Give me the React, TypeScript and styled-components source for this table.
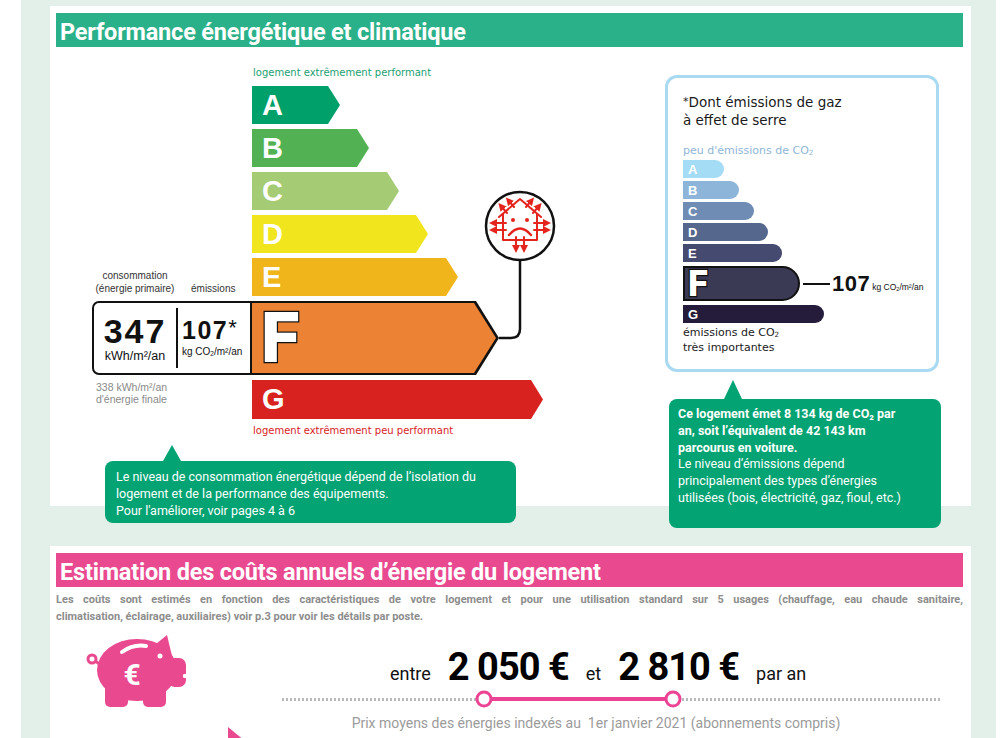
import React from "react";
import styled, { createGlobalStyle } from "styled-components";

const GlobalStyle = createGlobalStyle`
  html, body {
    margin: 0;
    padding: 0;
    background: #fff;
    overflow: hidden;
  }
  body {
    font-family: Roboto, "Liberation Sans", Arial, sans-serif;
  }
`;

const GREEN = "#03a373";
const PINK = "#e9498f";

const Page = styled.div`
  margin-left: 21px;
  width: 975px;
  height: 738px;
  overflow: hidden;
  box-sizing: border-box;
  padding: 6px 25px 0 29px;
  background: #e3efe9;
`;

const Panel = styled.section<{ $height?: number }>`
  background: #fff;
  height: ${(p) => (p.$height ? `${p.$height}px` : "auto")};
  padding: 7px 8px 0 6px;
  box-sizing: border-box;
  & + & {
    margin-top: 40px;
  }
`;

const SectionTitle = styled.h2<{ $bg: string }>`
  margin: 0;
  height: 34px;
  box-sizing: border-box;
  padding: 5px 0 0 4px;
  line-height: 30px;
  background: ${(p) => p.$bg};
  color: #fff;
  font: 700 23.5px Roboto, sans-serif;
  letter-spacing: -0.2px;
  white-space: nowrap;
`;

/* ---------- DPE part ---------- */

const DpeRow = styled.div`
  display: flex;
  margin-top: 19px;
`;

const LeftCol = styled.div`
  display: flex;
  flex-direction: column;
  margin-left: 36px;
`;

const ChartGrid = styled.div`
  display: grid;
  grid-template-columns: 160px 247px 60px;
  grid-template-rows: 15px repeat(5, 38px) 74px 39px 12px;
  row-gap: 5px;
`;

const ScaleLabel = styled.div<{ $color: string; $row: number }>`
  grid-column: 2 / 4;
  grid-row: ${(p) => p.$row};
  padding-left: 1px;
  font: 10px "DejaVu Sans", sans-serif;
  line-height: 13px;
  color: ${(p) => p.$color};
  white-space: nowrap;
`;

const Bar = styled.div<{ $color: string; $width: number; $row: number; $span?: boolean }>`
  grid-column: ${(p) => (p.$span ? "2 / 4" : "2")};
  grid-row: ${(p) => p.$row};
  width: ${(p) => p.$width}px;
  background: ${(p) => p.$color};
  clip-path: polygon(0 0, calc(100% - 12px) 0, 100% 50%, calc(100% - 12px) 100%, 0 100%);
  display: flex;
  align-items: center;
  padding-left: 10px;
  box-sizing: border-box;
  color: #fff;
  font: 700 29px "Liberation Sans", Arial, sans-serif;
`;

const FFrame = styled.div`
  grid-column: 2;
  grid-row: 7;
  background: #111;
  padding: 2px 3px 2px 0;
  clip-path: polygon(0 0, calc(100% - 23px) 0, 100% 50%, calc(100% - 23px) 100%, 0 100%);
  display: flex;
`;

const FFill = styled.div`
  flex: 1;
  background: #eb8234;
  clip-path: polygon(0 0, calc(100% - 22px) 0, 100% 50%, calc(100% - 22px) 100%, 0 100%);
  display: flex;
  align-items: center;
  padding-left: 9px;
`;

const BigLetter = styled.span<{ $size: number }>`
  font: 900 ${(p) => p.$size}px Roboto, "Liberation Sans", sans-serif;
  color: #fff;
  -webkit-text-stroke: 2.5px #111;
  paint-order: stroke fill;
  line-height: 1;
`;

const ValueCaptions = styled.div`
  grid-column: 1;
  grid-row: 6;
  align-self: end;
  display: flex;
  align-items: flex-end;
  font: 10px "Liberation Sans", Arial, sans-serif;
  line-height: 13px;
  color: #333;
  padding-bottom: 1px;
`;

const ConsoCaption = styled.div`
  width: 86px;
  text-align: center;
`;

const EmisCaption = styled.div`
  padding-left: 13px;
`;

const ValueBox = styled.div`
  grid-column: 1;
  grid-row: 7;
  border: 2px solid #111;
  border-radius: 7px 0 0 7px;
  display: flex;
  box-sizing: border-box;
  background: #fff;
`;

const ConsoValue = styled.div`
  width: 82px;
  display: flex;
  flex-direction: column;
  align-items: center;
  justify-content: center;
`;

const BigNumber = styled.div`
  font: 700 34px "Liberation Sans", Arial, sans-serif;
  letter-spacing: 2px;
  line-height: 36px;
  color: #111;
`;

const Unit = styled.div<{ $size: number }>`
  font: ${(p) => p.$size}px "Liberation Sans", Arial, sans-serif;
  color: #111;
  line-height: 14px;
  white-space: nowrap;
`;

const Divider = styled.div`
  width: 2px;
  background: #111;
  margin: 5px 0 5px 0;
`;

const EmisValue = styled.div`
  display: flex;
  flex-direction: column;
  justify-content: center;
  padding-left: 4px;
  padding-bottom: 4px;
`;

const MidNumber = styled.div`
  font: 700 25px "Liberation Sans", Arial, sans-serif;
  letter-spacing: 1.5px;
  line-height: 30px;
  color: #111;
  & span {
    font-weight: 400;
    font-size: 22px;
    vertical-align: 4px;
  }
`;

const Sub = styled.sub`
  font-size: 0.65em;
  vertical-align: -0.2em;
  line-height: 0;
`;

const FinalEnergy = styled.div`
  grid-column: 1;
  grid-row: 8;
  align-self: start;
  padding: 1px 0 0 4px;
  font: 10.5px "Liberation Sans", Arial, sans-serif;
  line-height: 12px;
  color: #8a8a8a;
`;

const HouseSvg = styled.svg`
  grid-column: 3;
  grid-row: 4 / 8;
  overflow: visible;
`;

const Callout = styled.div<{ $width: number; $height: number; $arrowLeft: number; $arrowH: number }>`
  position: relative;
  width: ${(p) => p.$width}px;
  height: ${(p) => p.$height}px;
  box-sizing: border-box;
  background: ${GREEN};
  border-radius: 8px;
  color: #fff;
  font: 12.5px Roboto, sans-serif;
  line-height: 17px;
  white-space: nowrap;
  &::before {
    content: "";
    position: absolute;
    left: ${(p) => p.$arrowLeft}px;
    top: -${(p) => p.$arrowH}px;
    border-left: 9px solid transparent;
    border-right: 9px solid transparent;
    border-bottom: ${(p) => p.$arrowH}px solid ${GREEN};
  }
`;

const LeftCallout = styled(Callout)`
  margin: 25px 0 0 13px;
  padding: 7px 11px;
`;

const RightCallout = styled(Callout)`
  margin: 27px 0 0 4px;
  padding: 7px 9px;
  line-height: 16.8px;
`;

const RightCol = styled.div`
  margin-left: auto;
  margin-right: 22px;
  padding-top: 9px;
  display: flex;
  flex-direction: column;
`;

const Co2Panel = styled.div`
  width: 274px;
  height: 297px;
  box-sizing: border-box;
  border: 3px solid #a9daf1;
  border-radius: 12px;
  padding: 15px 0 0 15px;
  font-family: "DejaVu Sans", Verdana, sans-serif;
  color: #1a1a1a;
`;

const Co2Title = styled.div`
  font-size: 13.5px;
  line-height: 18px;
  & small {
    font-size: 11px;
    vertical-align: 2px;
  }
`;

const Co2Note = styled.div<{ $color: string; $mt: number }>`
  margin-top: ${(p) => p.$mt}px;
  font-size: 11px;
  line-height: 15px;
  color: ${(p) => p.$color};
`;

const Co2Bars = styled.div`
  display: flex;
  flex-direction: column;
  gap: 3px;
  margin-top: 2px;
`;

const Co2Bar = styled.div<{ $color: string; $width: number }>`
  width: ${(p) => p.$width}px;
  height: 18px;
  background: ${(p) => p.$color};
  border-radius: 0 9px 9px 0;
  color: #fff;
  font: 700 13px "Liberation Sans", Arial, sans-serif;
  line-height: 19px;
  padding-left: 5px;
  box-sizing: border-box;
`;

const Co2FRow = styled.div`
  display: flex;
  align-items: center;
  margin: 1px 0;
`;

const Co2FBar = styled.div`
  width: 117px;
  height: 35px;
  box-sizing: border-box;
  background: #3b3a55;
  border: 2px solid #111;
  border-radius: 0 18px 18px 0;
  display: flex;
  align-items: center;
  padding-left: 3px;
`;

const Leader = styled.div`
  width: 27px;
  height: 2px;
  background: #111;
  margin-left: 3px;
`;

const Co2Value = styled.div`
  font: 700 22px "Liberation Sans", Arial, sans-serif;
  letter-spacing: 0.5px;
  margin-left: 2px;
  color: #111;
`;

const Co2Unit = styled.div`
  font: 8.5px "Liberation Sans", Arial, sans-serif;
  margin: 7px 0 0 2px;
  color: #111;
  white-space: nowrap;
`;

/* ---------- cost part ---------- */

const Description = styled.div`
  margin-top: 4px;
  font: 700 11px Roboto, sans-serif;
  line-height: 17px;
  color: #8d8d8d;
`;

const JustifiedLine = styled.span`
  display: block;
  text-align: justify;
  text-align-last: justify;
`;

const CostRow = styled.div`
  display: flex;
`;

const PigCol = styled.div`
  width: 226px;
  display: flex;
  flex-direction: column;
`;

const PigSvg = styled.svg`
  margin: 5px 0 0 24px;
`;

const PinkPointer = styled.div`
  margin: 17px 0 0 172px;
  width: 17px;
  height: 14px;
  background: ${PINK};
  clip-path: polygon(0 0, 100% 100%, 0 100%);
`;

const CostArea = styled.div`
  width: 658px;
  padding-top: 20px;
`;

const PriceLine = styled.div`
  display: flex;
  align-items: baseline;
  gap: 17px;
  padding-left: 108px;
  height: 40px;
  line-height: 40px;
`;

const Word = styled.span`
  font: 400 18px Roboto, sans-serif;
  color: #111;
`;

const Price = styled.span`
  font: 700 38px Roboto, sans-serif;
  letter-spacing: -1px;
  color: #000;
`;

const Slider = styled.div`
  position: relative;
  height: 16px;
  margin-top: 6px;
  display: flex;
  align-items: center;
`;

const Track = styled.div`
  width: 100%;
  height: 3px;
  background: repeating-linear-gradient(90deg, #b9b9b9 0 2px, transparent 2px 4px);
`;

const Range = styled.div`
  position: absolute;
  top: 6px;
  height: 4px;
  background: #ec4394;
`;

const Knob = styled.div`
  position: absolute;
  top: 0;
  width: 17px;
  height: 17px;
  box-sizing: border-box;
  border: 3px solid #ec4394;
  border-radius: 50%;
  background: #fff;
  transform: translate(-50%, -0.5px);
`;

const PriceNote = styled.div`
  margin-top: 7px;
  padding-right: 30px;
  text-align: center;
  font: 14px Roboto, sans-serif;
  line-height: 18px;
  color: #9b9b9b;
  white-space: pre;
`;

const energyBars = [
  { letter: "A", color: "#00a06b", width: 88 },
  { letter: "B", color: "#52b153", width: 117 },
  { letter: "C", color: "#a5cc74", width: 147 },
  { letter: "D", color: "#f1e51e", width: 176 },
  { letter: "E", color: "#f0b51a", width: 206 },
];

const co2Bars = [
  { letter: "A", color: "#a4dbf5", width: 41 },
  { letter: "B", color: "#8cb5d9", width: 56 },
  { letter: "C", color: "#6f8cb4", width: 71 },
  { letter: "D", color: "#56678d", width: 85 },
  { letter: "E", color: "#454a71", width: 99 },
];

const priceKnobs = [30.7, 59.4];

const HouseIcon = () => (
  <HouseSvg width="60" height="203" viewBox="0 0 60 203">
    <defs>
      <marker id="ah" markerWidth="4" markerHeight="4" refX="2" refY="2" orient="auto" markerUnits="strokeWidth">
        <path d="M0 0 L4 2 L0 4 Z" fill="#e3251d" />
      </marker>
    </defs>
    <path d="M21 89 V157 Q21 166 12 166 H0" fill="none" stroke="#111" strokeWidth="2.5" />
    <circle cx="21" cy="54" r="34" fill="#fff" stroke="#111" strokeWidth="2.5" />
    <g fill="none" stroke="#e3251d" strokeWidth="2" strokeLinecap="round" strokeLinejoin="round">
      <polyline points="0,45 21,27 42,45" />
      <polyline points="4,42 4,68 38,68 38,42" />
      <line x1="8" y1="41" x2="2" y2="34" markerEnd="url(#ah)" />
      <line x1="15" y1="35" x2="9.5" y2="28.5" markerEnd="url(#ah)" />
      <line x1="34" y1="41" x2="40" y2="34" markerEnd="url(#ah)" />
      <line x1="27" y1="35" x2="32.5" y2="28.5" markerEnd="url(#ah)" />
      <line x1="7" y1="51" x2="-6" y2="51" markerEnd="url(#ah)" />
      <line x1="7" y1="58" x2="-6" y2="58" markerEnd="url(#ah)" />
      <line x1="35" y1="51" x2="48" y2="51" markerEnd="url(#ah)" />
      <line x1="35" y1="58" x2="48" y2="58" markerEnd="url(#ah)" />
      <line x1="17" y1="65" x2="17" y2="77" markerEnd="url(#ah)" />
      <line x1="25" y1="65" x2="25" y2="77" markerEnd="url(#ah)" />
      <path d="M10 63 Q21 50 32 63" strokeWidth="2.4" />
    </g>
    <circle cx="14" cy="48" r="2" fill="#e3251d" />
    <circle cx="28" cy="48" r="2" fill="#e3251d" />
  </HouseSvg>
);

const PiggyBank = () => (
  <PigSvg width="110" height="80" viewBox="80 630 110 80">
    <g fill={PINK}>
      <ellipse cx="137" cy="670" rx="40" ry="31" />
      <path d="M151 648 L167 635 L172 656 Z" />
      <rect x="168" y="658" width="18" height="29" rx="7" />
      <rect x="105" y="683" width="23" height="24" rx="5" />
      <rect x="143" y="683" width="23" height="24" rx="5" />
    </g>
    <circle cx="92" cy="659" r="4" fill="none" stroke={PINK} strokeWidth="3" />
    <line x1="95" y1="661" x2="101" y2="665" stroke={PINK} strokeWidth="3" />
    <circle cx="160" cy="656" r="2.5" fill="#fff" />
    <circle cx="185" cy="676" r="2.2" fill="#fff" />
    <path d="M122 652 Q133 644 146 646" fill="none" stroke="#fff" strokeWidth="4" strokeLinecap="round" />
    <text x="132" y="685" textAnchor="middle" fill="#fff" fontFamily="Roboto, sans-serif" fontWeight="700" fontSize="30">
      €
    </text>
  </PigSvg>
);

export default function App() {
  return (
    <>
      <GlobalStyle />
      <Page>
        <Panel $height={500}>
          <SectionTitle $bg="#2bb189">Performance énergétique et climatique</SectionTitle>
          <DpeRow>
            <LeftCol>
              <ChartGrid>
                <ScaleLabel $row={1} $color="#1c9e72">
                  logement extrêmement performant
                </ScaleLabel>
                {energyBars.map((b, i) => (
                  <Bar key={b.letter} $row={i + 2} $color={b.color} $width={b.width}>
                    {b.letter}
                  </Bar>
                ))}
                <ValueCaptions>
                  <ConsoCaption>
                    consommation
                    <br />
                    (énergie primaire)
                  </ConsoCaption>
                  <EmisCaption>émissions</EmisCaption>
                </ValueCaptions>
                <ValueBox>
                  <ConsoValue>
                    <BigNumber>347</BigNumber>
                    <Unit $size={12.5}>kWh/m²/an</Unit>
                  </ConsoValue>
                  <Divider />
                  <EmisValue>
                    <MidNumber>
                      107<span>*</span>
                    </MidNumber>
                    <Unit $size={10}>
                      kg CO<Sub>2</Sub>/m²/an
                    </Unit>
                  </EmisValue>
                </ValueBox>
                <FFrame>
                  <FFill>
                    <BigLetter $size={70}>F</BigLetter>
                  </FFill>
                </FFrame>
                <HouseIcon />
                <FinalEnergy>
                  338 kWh/m²/an
                  <br />
                  d'énergie finale
                </FinalEnergy>
                <Bar $row={8} $span $color="#d7221f" $width={291}>
                  G
                </Bar>
                <ScaleLabel $row={9} $color="#d7221f">
                  logement extrêmement peu performant
                </ScaleLabel>
              </ChartGrid>
              <LeftCallout $width={411} $height={62} $arrowLeft={58} $arrowH={16}>
                Le niveau de consommation énergétique dépend de l’isolation du
                <br />
                logement et de la performance des équipements.
                <br />
                Pour l'améliorer, voir pages 4 à 6
              </LeftCallout>
            </LeftCol>
            <RightCol>
              <Co2Panel>
                <Co2Title>
                  <small>*</small>Dont émissions de gaz
                  <br />à effet de serre
                </Co2Title>
                <Co2Note $color="#8fb6d6" $mt={14}>
                  peu d'émissions de CO<Sub>2</Sub>
                </Co2Note>
                <Co2Bars>
                  {co2Bars.map((b) => (
                    <Co2Bar key={b.letter} $color={b.color} $width={b.width}>
                      {b.letter}
                    </Co2Bar>
                  ))}
                  <Co2FRow>
                    <Co2FBar>
                      <BigLetter $size={36}>F</BigLetter>
                    </Co2FBar>
                    <Leader />
                    <Co2Value>107</Co2Value>
                    <Co2Unit>
                      kg CO<Sub>2</Sub>/m²/an
                    </Co2Unit>
                  </Co2FRow>
                  <Co2Bar $color="#251b3b" $width={141}>
                    G
                  </Co2Bar>
                </Co2Bars>
                <Co2Note $color="#1a1a1a" $mt={2}>
                  émissions de CO<Sub>2</Sub>
                  <br />
                  très importantes
                </Co2Note>
              </Co2Panel>
              <RightCallout $width={272} $height={129} $arrowLeft={55} $arrowH={19}>
                <b>
                  Ce logement émet 8 134 kg de CO₂ par
                  <br />
                  an, soit l’équivalent de 42 143 km
                  <br />
                  parcourus en voiture.
                </b>
                <br />
                Le niveau d’émissions dépend
                <br />
                principalement des types d’énergies
                <br />
                utilisées (bois, électricité, gaz, fioul, etc.)
              </RightCallout>
            </RightCol>
          </DpeRow>
        </Panel>

        <Panel>
          <SectionTitle $bg={PINK}>Estimation des coûts annuels d’énergie du logement</SectionTitle>
          <Description>
            <JustifiedLine>
              Les coûts sont estimés en fonction des caractéristiques de votre logement et pour une utilisation
              standard sur 5 usages (chauffage, eau chaude sanitaire,
            </JustifiedLine>
            climatisation, éclairage, auxiliaires) voir p.3 pour voir les détails par poste.
          </Description>
          <CostRow>
            <PigCol>
              <PiggyBank />
              <PinkPointer />
            </PigCol>
            <CostArea>
              <PriceLine>
                <Word>entre</Word>
                <Price>2 050 €</Price>
                <Word>et</Word>
                <Price>2 810 €</Price>
                <Word>par an</Word>
              </PriceLine>
              <Slider>
                <Track />
                <Range
                  style={{
                    left: `${priceKnobs[0]}%`,
                    width: `${priceKnobs[1] - priceKnobs[0]}%`,
                  }}
                />
                {priceKnobs.map((k) => (
                  <Knob key={k} style={{ left: `${k}%` }} />
                ))}
              </Slider>
              <PriceNote>Prix moyens des énergies indexés au  1er janvier 2021 (abonnements compris)</PriceNote>
            </CostArea>
          </CostRow>
        </Panel>
      </Page>
    </>
  );
}
